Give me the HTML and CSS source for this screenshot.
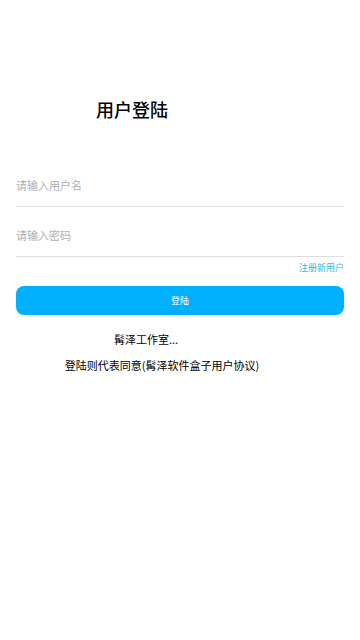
FILE: index.html
```html
<!DOCTYPE html>
<html lang="zh">
<head>
<meta charset="utf-8">
<link rel="stylesheet" href="styles.css">
</head>
<body>
<div class="page">
  <h1 class="title">用户登陆</h1>
  <div class="form">
    <div class="field"><span class="ph">请输入用户名</span></div>
    <div class="field"><span class="ph">请输入密码</span></div>
    <div class="reg">注册新用户</div>
    <div class="btn">登陆</div>
    <div class="studio">髯泽工作室...</div>
    <div class="agree">登陆则代表同意(髯泽软件盒子用户协议)</div>
  </div>
</div>
</body>
</html>
```
FILE: styles.css
```css
html, body {
  margin: 0;
  padding: 0;
  background: #ffffff;
}
body {
  font-family: "Noto Sans CJK SC", "Noto Sans", sans-serif;
  color: #000;
}
.page {
  width: 360px;
  height: 640px;
  display: flex;
  flex-direction: column;
}
.title {
  margin: 96px 0 0 96px;
  font-size: 18px;
  font-weight: 500;
  line-height: 26px;
  width: 72px;
}
.form {
  margin-top: 35px;
  padding: 0 16px;
  display: flex;
  flex-direction: column;
}
.field {
  height: 50px;
  box-sizing: border-box;
  padding-top: 6px;
  border-bottom: 1px solid #dddddd;
  display: flex;
  align-items: center;
}
.ph {
  font-size: 11px;
  color: #b0b0b0;
}
.reg {
  align-self: flex-end;
  font-size: 9px;
  color: #33b5e5;
  margin-top: 5px;
  line-height: 12px;
}
.btn {
  margin-top: 12px;
  height: 29px;
  border-radius: 8px;
  background: #00b0ff;
  color: #fff;
  font-size: 9px;
  display: flex;
  align-items: center;
  justify-content: center;
}
.studio {
  margin-top: 16px;
  font-size: 11px;
  text-align: center;
  padding-right: 68px;
  line-height: 16px;
}
.agree {
  margin-top: 10px;
  font-size: 11px;
  text-align: center;
  padding-right: 36px;
  line-height: 16px;
}
```
